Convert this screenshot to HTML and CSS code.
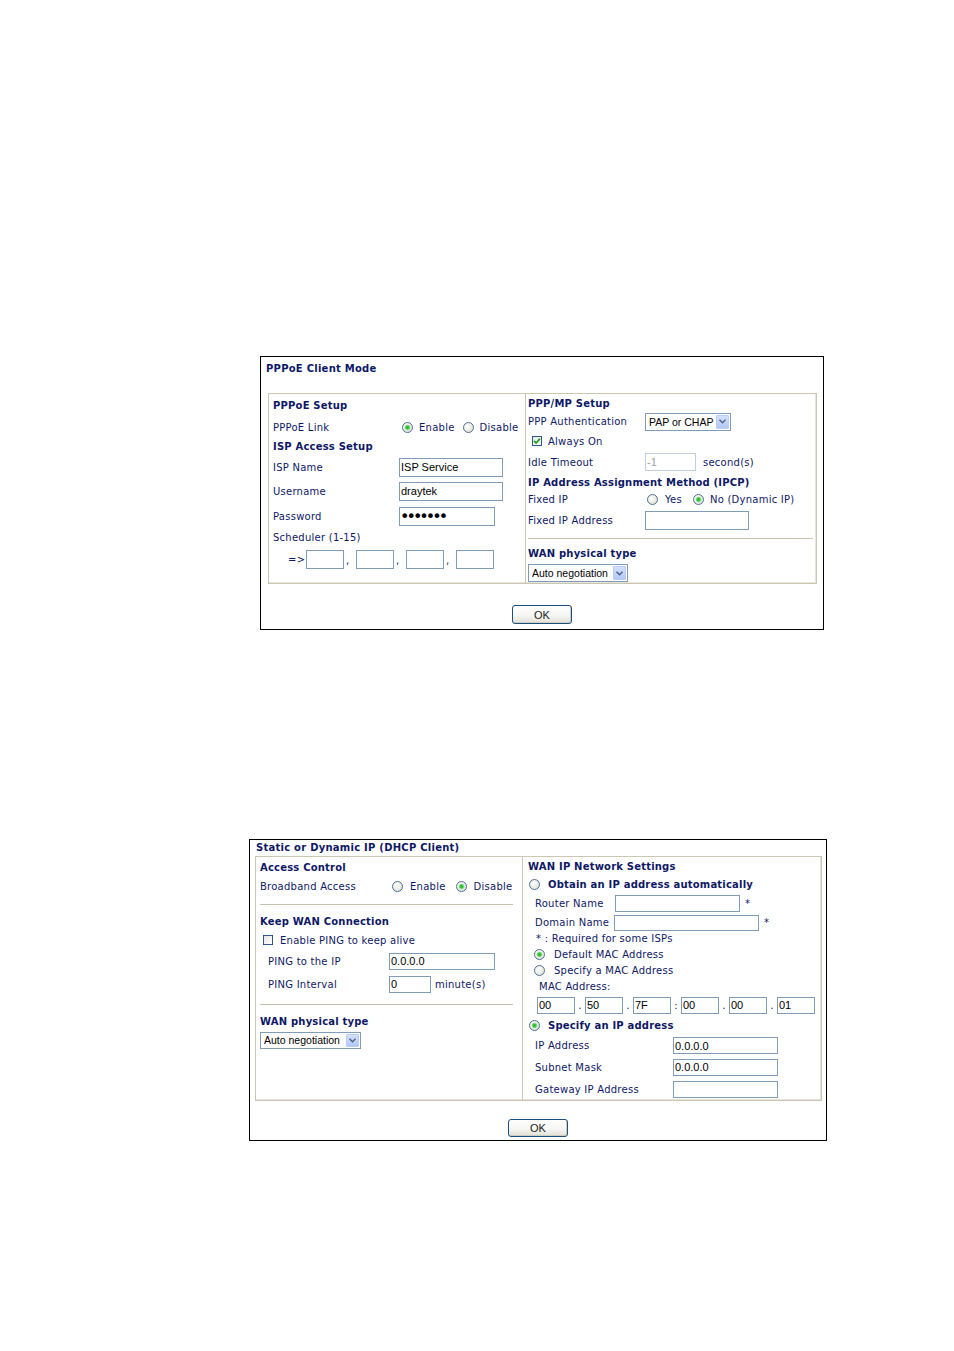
FILE: index.html
```html
<!DOCTYPE html>
<html>
<head>
<meta charset="utf-8">
<title>WAN setup</title>
<link rel="stylesheet" href="styles.css">
</head>
<body>
<div class="page">

<section class="panel p1">
  <div class="ptitle">PPPoE Client Mode</div>
  <div class="inner">
    <div class="col left">
      <div class="row h22 b">PPPoE Setup</div>
      <div class="row h22">
        <span class="lbl w126">PPPoE Link</span>
        <label class="opt o1"><input class="rd" type="radio" name="lnk" checked>Enable</label>
        <label class="opt o2"><input class="rd" type="radio" name="lnk">Disable</label>
      </div>
      <div class="row h16 b">ISP Access Setup</div>
      <div class="row h26">
        <span class="lbl w126">ISP Name</span>
        <input class="tx w104 t19" type="text" value="ISP Service">
      </div>
      <div class="row h22">
        <span class="lbl w126">Username</span>
        <input class="tx w104 t19" type="text" value="draytek">
      </div>
      <div class="row h28">
        <span class="lbl w126">Password</span>
        <input class="tx pw w96 t19" type="password" value="draytek">
      </div>
      <div class="row h14">Scheduler (1-15)</div>
      <div class="row h30 sched">
        <span class="arrow-lbl">=&gt;</span>
        <input class="tx w38 t19" type="text" value=""><span class="sep">,</span>
        <input class="tx w38 t19" type="text" value=""><span class="sep">,</span>
        <input class="tx w38 t19" type="text" value=""><span class="sep">,</span>
        <input class="tx w38 t19" type="text" value="">
      </div>
    </div>
    <div class="col right">
      <div class="row h18 b">PPP/MP Setup</div>
      <div class="row h19">
        <span class="lbl w117">PPP Authentication</span>
        <div class="sel w86 t18"><span class="stext">PAP or CHAP</span><span class="arr"><svg width="7" height="5" viewBox="0 0 7 5"><path d="M0.5 0.8 L3.5 3.8 L6.5 0.8" fill="none" stroke="#4d6185" stroke-width="1.4"/></svg></span></div>
      </div>
      <div class="row h20">
        <span class="cb on ml4"><svg width="8" height="8" viewBox="0 0 8 8"><path d="M1 3.8 L3.1 6 L7 1.6" fill="none" stroke="#21a121" stroke-width="1.8"/></svg></span>
        <span class="cbtext">Always On</span>
      </div>
      <div class="row h22">
        <span class="lbl w117">Idle Timeout</span>
        <input class="tx dis w51 t18" type="text" value="-1" disabled>
        <span class="unit">second(s)</span>
      </div>
      <div class="row h18 b">IP Address Assignment Method (IPCP)</div>
      <div class="row h17">
        <span class="lbl w117">Fixed IP</span>
        <label class="opt o3"><input class="rd" type="radio" name="fip">Yes</label>
        <label class="opt o4"><input class="rd" type="radio" name="fip" checked>No (Dynamic IP)</label>
      </div>
      <div class="row h24">
        <span class="lbl w117">Fixed IP Address</span>
        <input class="tx w104 t19" type="text" value="">
      </div>
      <div class="row h12"><div class="hr w285"></div></div>
      <div class="row h19 b">WAN physical type</div>
      <div class="row h20">
        <div class="sel w100 t18"><span class="stext">Auto negotiation</span><span class="arr"><svg width="7" height="5" viewBox="0 0 7 5"><path d="M0.5 0.8 L3.5 3.8 L6.5 0.8" fill="none" stroke="#4d6185" stroke-width="1.4"/></svg></span></div>
      </div>
    </div>
  </div>
  <div class="actions"><button class="btn b19" type="button">OK</button></div>
</section>

<section class="panel p2">
  <div class="ptitle">Static or Dynamic IP (DHCP Client)</div>
  <div class="inner">
    <div class="col left">
      <div class="row h20 b">Access Control</div>
      <div class="row h18">
        <span class="lbl w132">Broadband Access</span>
        <label class="opt o5"><input class="rd" type="radio" name="bba">Enable</label>
        <label class="opt o6"><input class="rd" type="radio" name="bba" checked>Disable</label>
      </div>
      <div class="row h18"><div class="hr w253"></div></div>
      <div class="row h17 b">Keep WAN Connection</div>
      <div class="row h20">
        <span class="cb ml3"></span>
        <span class="cbtext g7">Enable PING to keep alive</span>
      </div>
      <div class="row h22 ind8">
        <span class="lbl w121">PING to the IP</span>
        <input class="tx w106 t17" type="text" value="0.0.0.0">
      </div>
      <div class="row h24 ind8">
        <span class="lbl w121">PING Interval</span>
        <input class="tx w42 t17" type="text" value="0">
        <span class="unit u4">minute(s)</span>
      </div>
      <div class="row h16"><div class="hr w253"></div></div>
      <div class="row h18 b">WAN physical type</div>
      <div class="row h20">
        <div class="sel w101 t17"><span class="stext">Auto negotiation</span><span class="arr"><svg width="7" height="5" viewBox="0 0 7 5"><path d="M0.5 0.8 L3.5 3.8 L6.5 0.8" fill="none" stroke="#4d6185" stroke-width="1.4"/></svg></span></div>
      </div>
    </div>
    <div class="col right">
      <div class="row h18 b">WAN IP Network Settings</div>
      <div class="row h18 b">
        <label class="opt o7"><input class="rd" type="radio" name="mode">Obtain an IP address automatically</label>
      </div>
      <div class="row h21 ind7">
        <span class="lbl w80">Router Name</span>
        <input class="tx w125 t17" type="text" value="">
        <span class="star">*</span>
      </div>
      <div class="row h17 ind7">
        <span class="lbl w79">Domain Name</span>
        <input class="tx w145 t16" type="text" value="">
        <span class="star">*</span>
      </div>
      <div class="row h14 ind8">* : Required for some ISPs</div>
      <div class="row h18">
        <label class="opt o8"><input class="rd" type="radio" name="mac" checked>Default MAC Address</label>
      </div>
      <div class="row h15">
        <label class="opt o8"><input class="rd" type="radio" name="mac">Specify a MAC Address</label>
      </div>
      <div class="row h17 ind11">MAC Address:</div>
      <div class="row h20 ind9">
        <input class="tx w38 t17" type="text" value="00"><span class="msep">.</span>
        <input class="tx w38 t17" type="text" value="50"><span class="msep">.</span>
        <input class="tx w38 t17" type="text" value="7F"><span class="msep">:</span>
        <input class="tx w38 t17" type="text" value="00"><span class="msep">.</span>
        <input class="tx w38 t17" type="text" value="00"><span class="msep">.</span>
        <input class="tx w38 t17" type="text" value="01">
      </div>
      <div class="row h20 b">
        <label class="opt o7"><input class="rd" type="radio" name="mode" checked>Specify an IP address</label>
      </div>
      <div class="row h21 ind7">
        <span class="lbl w138">IP Address</span>
        <input class="tx w105 t17" type="text" value="0.0.0.0">
      </div>
      <div class="row h22 ind7">
        <span class="lbl w138">Subnet Mask</span>
        <input class="tx w105 t17" type="text" value="0.0.0.0">
      </div>
      <div class="row h22 ind7">
        <span class="lbl w138">Gateway IP Address</span>
        <input class="tx w105 t17" type="text" value="">
      </div>
    </div>
  </div>
  <div class="actions a2"><button class="btn b18" type="button">OK</button></div>
</section>

</div>
</body>
</html>
```

FILE: styles.css
```css
html, body {
  margin: 0;
  padding: 0;
  background: #ffffff;
}
body {
  font-family: "DejaVu Sans", Verdana, sans-serif;
  font-size: 10px;
  letter-spacing: 0.25px;
  color: #0e1866;
}
.page {
  width: 954px;
  min-height: 1351px;
  overflow: hidden;
}

/* panels */
.panel {
  border: 1px solid #000;
  box-sizing: border-box;
}
.p1 { margin: 356px 0 0 260px; width: 564px; height: 274px; }
.p2 { margin: 209px 0 0 249px; width: 578px; height: 302px; }

.ptitle { font-weight: bold; box-sizing: border-box; white-space: nowrap; }
.p1 .ptitle { height: 36px; padding: 5px 0 0 5px; line-height: 14px; }
.p2 .ptitle { height: 16px; padding-left: 6px; line-height: 15px; }

.inner {
  display: flex;
  box-sizing: border-box;
  border: 1px solid #cbc6b1;
  box-shadow: inset -1px -1px 0 #e7e4da;
}
.p1 .inner { margin-left: 7px; width: 549px; height: 191px; }
.p2 .inner { margin-left: 5px; width: 567px; height: 245px; }

.col { box-sizing: border-box; }
.col.left { border-right: 1px solid #cbc6b1; flex: none; }
.col.right { flex: 1; min-width: 0; }
.p1 .left { width: 257px; padding-left: 4px; }
.p1 .right { padding-left: 2px; }
.p2 .left { width: 267px; padding-left: 4px; }
.p2 .right { padding-left: 5px; }

/* rows */
.row { display: flex; align-items: center; white-space: nowrap; }
.h12 { height: 12px; } .h14 { height: 14px; } .h15 { height: 15px; }
.h16 { height: 16px; } .h17 { height: 17px; } .h18 { height: 18px; }
.h19 { height: 19px; } .h20 { height: 20px; } .h21 { height: 21px; }
.h22 { height: 22px; } .h24 { height: 24px; } .h26 { height: 26px; }
.h28 { height: 28px; } .h30 { height: 30px; }
.b { font-weight: bold; letter-spacing: 0.2px; }
.ind7 { padding-left: 7px; } .ind8 { padding-left: 8px; }
.ind9 { padding-left: 9px; } .ind11 { padding-left: 11px; }

.lbl { flex: none; overflow: hidden; }
.w79 { width: 79px; } .w80 { width: 80px; } .w117 { width: 117px; }
.w121 { width: 121px; } .w126 { width: 126px; } .w132 { width: 132px; }
.w138 { width: 138px; }

.hr { height: 1px; background: #c6c2ae; }
.w253 { width: 253px; } .w285 { width: 285px; }

/* radios */
.opt { display: flex; align-items: center; gap: 6px; flex: none; }
.o1 { margin-left: 3px; }
.o2 { margin-left: 8px; }
.o3 { margin-left: 2px; gap: 7px; }
.o4 { margin-left: 11px; }
.o5 { gap: 7px; }
.o6 { margin-left: 10px; gap: 7px; }
.o7 { margin-left: 1px; gap: 8px; }
.o8 { margin-left: 6px; gap: 9px; }
.rd {
  appearance: none;
  -webkit-appearance: none;
  width: 11px;
  height: 11px;
  margin: 0;
  flex: none;
  box-sizing: border-box;
  border: 1px solid #4f7198;
  border-radius: 50%;
  background: radial-gradient(circle at 40% 40%, #ffffff 0, #f0f0ea 45%, #d4d4cc 100%);
}
.rd:checked {
  background:
    radial-gradient(circle at 50% 50%, #1fb51f 0, #3ccc3c 1.6px, #a7e4a7 2.6px, rgba(255,255,255,0) 3.2px),
    radial-gradient(circle at 40% 40%, #ffffff 0, #f0f0ea 45%, #d4d4cc 100%);
}

/* checkboxes */
.cb {
  width: 10px;
  height: 10px;
  box-sizing: border-box;
  border: 1px solid #2f5a88;
  background: linear-gradient(135deg, #e6e6e0, #ffffff);
  display: flex;
  align-items: center;
  justify-content: center;
  flex: none;
}
.ml3 { margin-left: 3px; } .ml4 { margin-left: 4px; }
.cbtext { margin-left: 6px; }
.g7 { margin-left: 7px; }

/* text inputs */
.tx {
  box-sizing: border-box;
  margin: 0;
  padding: 0 1px;
  border: 1px solid #7f9db9;
  background: #fff;
  font-family: "Liberation Sans", Arial, sans-serif;
  font-size: 11px;
  letter-spacing: 0;
  color: #000;
  outline: none;
  flex: none;
}
.tx.pw { font-family: "DejaVu Sans", sans-serif; font-size: 16px; letter-spacing: -3px; padding-left: 0; }
.tx.dis { border-color: #c3cedb; color: #a0a0a0; background: #fff; }
.w38 { width: 38px; } .w42 { width: 42px; } .w51 { width: 51px; }
.w96 { width: 96px; } .w104 { width: 104px; } .w105 { width: 105px; }
.w106 { width: 106px; } .w125 { width: 125px; } .w145 { width: 145px; }
.w86 { width: 86px; } .w100 { width: 100px; } .w101 { width: 101px; }
.t16 { height: 16px; } .t17 { height: 17px; } .t18 { height: 18px; } .t19 { height: 19px; }

.unit { margin-left: 7px; }
.u4 { margin-left: 4px; }
.star { margin-left: 5px; }

.sched { padding-left: 15px; }
.arrow-lbl { width: 18px; flex: none; }
.sep { width: 12px; flex: none; padding-left: 2px; box-sizing: border-box; align-self: flex-end; margin-bottom: 8px; line-height: 10px; }
.msep { width: 10px; flex: none; text-align: center; }

/* select */
.sel {
  display: flex;
  align-items: center;
  box-sizing: border-box;
  border: 1px solid #7f9db9;
  background: #fff;
  padding: 1px 1px 1px 3px;
  font-family: "Liberation Sans", Arial, sans-serif;
  font-size: 10.5px;
  letter-spacing: 0;
  color: #000;
  flex: none;
}
.stext { flex: 1; overflow: hidden; }
.arr {
  flex: none;
  width: 13px;
  height: 100%;
  box-sizing: border-box;
  border: 1px solid #b8ccf4;
  border-radius: 1px;
  background: linear-gradient(#d3e0fd, #b3c8f6);
  display: flex;
  align-items: center;
  justify-content: center;
}

/* buttons */
.actions { display: flex; justify-content: center; margin-top: 21px; }
.actions.a2 { margin-top: 18px; }
.btn {
  width: 60px;
  box-sizing: border-box;
  border: 1px solid #1d4f7e;
  border-radius: 3px;
  background: linear-gradient(#ffffff 0%, #f6f6f3 55%, #e2e0d6 100%);
  box-shadow: inset -1px -1px 0 #d0cdc2;
  font-family: "Liberation Sans", Arial, sans-serif;
  font-size: 11px;
  letter-spacing: 0;
  color: #222;
  padding: 0;
}
.b19 { height: 19px; } .b18 { height: 18px; }
```
